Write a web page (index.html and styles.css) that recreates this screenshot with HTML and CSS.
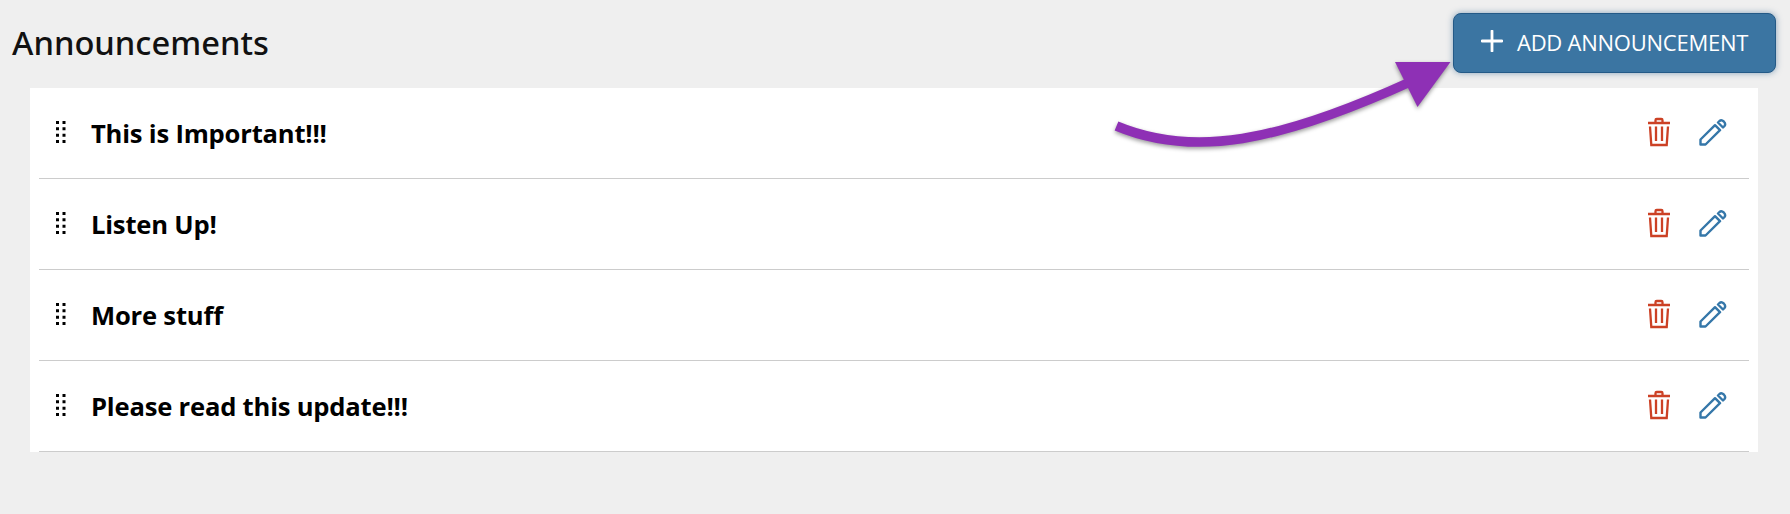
FILE: index.html
```html
<!DOCTYPE html>
<html lang="en">
<head>
  <meta charset="utf-8">
  <title>Announcements</title>
  <link rel="stylesheet" href="styles.css">
</head>
<body>
  <svg class="defs">
    <symbol id="grip" viewBox="0 0 10 22">
      <path d="M0 0h3v3h-3zM6.5 0h3v3h-3zM0 6.3h3v3h-3zM6.5 6.3h3v3h-3zM0 12.7h3v3h-3zM6.5 12.7h3v3h-3zM0 19h3v3h-3zM6.5 19h3v3h-3z"/>
    </symbol>
    <symbol id="trash" viewBox="0 0 24 30">
      <path d="M1 6h22M8.5 5.5V3.2q0-1.2 1.2-1.2h4.6q1.2 0 1.2 1.2v2.3M3 9.5 4.3 28h15.4L21 9.5M9 9.5V24M15 9.5V24"/>
    </symbol>
    <symbol id="pencil" viewBox="0 0 28 28">
      <path d="M1.5 26.5v-5L16 7.200l5 5L6.500 26.500zM19 4.500l1.500-1.500q2-1.600 4.300.5q2.300 2.300.7 4.500L24 9.500z"/>
    </symbol>
  </svg>

  <header class="header">
    <h1>Announcements</h1>
    <button class="add">
      <svg class="plus" viewBox="0 0 22 22"><path d="M11 1v20M1 11h20"/></svg>
      <span>ADD ANNOUNCEMENT</span>
    </button>
  </header>

  <ul class="list">
    <li class="item">
      <svg class="grip"><use href="#grip"/></svg>
      <span class="title">This is Important!!!</span>
      <svg class="trash"><use href="#trash"/></svg>
      <svg class="pencil"><use href="#pencil"/></svg>
    </li>
    <li class="item">
      <svg class="grip"><use href="#grip"/></svg>
      <span class="title">Listen Up!</span>
      <svg class="trash"><use href="#trash"/></svg>
      <svg class="pencil"><use href="#pencil"/></svg>
    </li>
    <li class="item">
      <svg class="grip"><use href="#grip"/></svg>
      <span class="title">More stuff</span>
      <svg class="trash"><use href="#trash"/></svg>
      <svg class="pencil"><use href="#pencil"/></svg>
    </li>
    <li class="item">
      <svg class="grip"><use href="#grip"/></svg>
      <span class="title">Please read this update!!!</span>
      <svg class="trash"><use href="#trash"/></svg>
      <svg class="pencil"><use href="#pencil"/></svg>
    </li>
  </ul>

  <svg class="arrow" viewBox="0 0 380 120">
    <path class="arrow-line" d="M26.5 86C103 118 188 102 320 42"/>
    <path class="arrow-head" d="M305 22h55.5L327.5 67z"/>
  </svg>
</body>
</html>
```
FILE: styles.css
```css
body{margin:0;background:#efefef;font-family:"Open Sans","Noto Sans",sans-serif;color:#000}
.defs{display:none}
.header{display:flex;justify-content:space-between;align-items:center;height:60px;padding:13px 14px 15px 12px}
h1{margin:0;font-family:"Noto Sans",sans-serif;font-size:32.7px;font-weight:500;color:#111;line-height:60px}
.add{display:flex;align-items:center;box-sizing:border-box;width:323px;height:60px;padding:0 0 0 27px;gap:14px;background:#3b75a2;border:1px solid #245a87;border-radius:8px;box-shadow:0 0 6px rgba(36,90,135,.5);color:#fff;font-family:inherit;font-size:22px;letter-spacing:-.25px;white-space:nowrap}
.add span{margin-top:-2px}
.plus{width:22px;height:22px;margin-top:-4px;fill:none;stroke:#fff;stroke-width:2.8;stroke-linecap:round}
.list{list-style:none;margin:0 32px 0 30px;padding:0 9px;background:#fff}
.item{display:flex;align-items:center;box-sizing:border-box;height:91px;padding:0 22px 0 17px;border-bottom:1px solid #ccc}
.grip{width:10px;height:22px;margin-top:-3px}
.title{flex:1;margin-left:25px;font-size:25.6px;font-weight:700;letter-spacing:-.2px}
.trash{width:24px;height:30px;margin-top:-2px;fill:none;stroke:#cc4125;stroke-width:2.3}
.pencil{width:28px;height:28px;margin:-2px 0 0 28px;fill:none;stroke:#3577a9;stroke-width:2.4;stroke-linejoin:round}
.arrow{position:absolute;left:1090px;top:40px;width:380px;height:120px;pointer-events:none;filter:drop-shadow(0 2px 2px rgba(0,0,0,.4))}
.arrow-line{fill:none;stroke:#8e30b5;stroke-width:9.5}
.arrow-head{fill:#8e30b5}
```
